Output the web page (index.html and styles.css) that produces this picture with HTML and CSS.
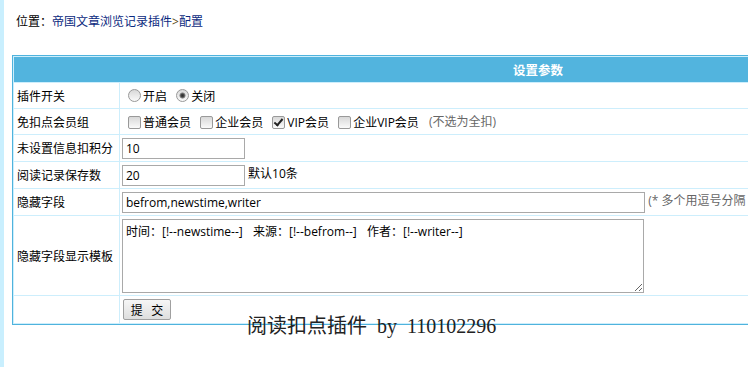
FILE: index.html
```html
<!DOCTYPE html>
<html lang="zh-CN">
<head>
    <meta charset="UTF-8">
    <title>阅读扣点插件 - 配置</title>
    <link rel="stylesheet" href="styles.css">
</head>
<body>
    <div class="frame">
        <div class="position">位置：<a href="#">帝国文章浏览记录插件</a><span class="sep">&gt;</span><a href="#">配置</a></div>
        <form id="setForm">
            <table class="tableborder">
                <tr class="header">
                    <td colspan="2">设置参数</td>
                </tr>
                <tr>
                    <td class="label">插件开关</td>
                    <td>
                        <input type="radio" name="open" value="1"><span class="opt">开启</span>
                        <input type="radio" name="open" value="0" checked><span class="opt">关闭</span>
                    </td>
                </tr>
                <tr>
                    <td class="label">免扣点会员组</td>
                    <td>
                        <input type="checkbox" name="group[]" value="1"><span class="opt">普通会员</span>
                        <input type="checkbox" name="group[]" value="2"><span class="opt">企业会员</span>
                        <input type="checkbox" name="group[]" value="3" checked><span class="opt">VIP会员</span>
                        <input type="checkbox" name="group[]" value="4"><span class="opt">企业VIP会员</span>
                        <span class="note group-note">(不选为全扣)</span>
                    </td>
                </tr>
                <tr class="tall">
                    <td class="label">未设置信息扣积分</td>
                    <td><input type="text" class="short" name="fen" value="10"></td>
                </tr>
                <tr class="tall">
                    <td class="label">阅读记录保存数</td>
                    <td><input type="text" class="short" name="num" value="20"> 默认10条</td>
                </tr>
                <tr class="tall">
                    <td class="label">隐藏字段</td>
                    <td><input type="text" class="long" name="fields" value="befrom,newstime,writer"> <span class="note">(* 多个用逗号分隔</span></td>
                </tr>
                <tr class="area">
                    <td class="label">隐藏字段显示模板</td>
                    <td><textarea name="temp">时间：[!--newstime--]&nbsp;&nbsp;来源：[!--befrom--]&nbsp;&nbsp;作者：[!--writer--]</textarea></td>
                </tr>
                <tr class="submit-row">
                    <td></td>
                    <td><input type="submit" value="提 交"></td>
                </tr>
            </table>
        </form>
        <div class="footer">阅读扣点插件 by 110102296</div>
    </div>
</body>
</html>
```

FILE: styles.css
```css
body {
    margin: 0;
    padding: 0;
    background-color: #fff;
    font-family: "Open Sans", "Noto Sans CJK SC", sans-serif;
    font-size: 12px;
    color: #000;
    overflow: hidden;
}
.frame {
    border-left: 4px solid #c9effe;
    padding-left: 8px;
    min-height: 367px;
    box-sizing: border-box;
}
.position {
    padding-left: 4px;
    padding-top: 14px;
    line-height: 16px;
    margin-bottom: 25px;
}
.position a {
    color: #0b2a80;
    text-decoration: none;
}
.position .sep {
    color: #5a4a10;
}
.tableborder {
    width: 1052px;
    border: 1px solid #4fb3dd;
    border-spacing: 1px;
    background-color: #cdeefc;
}
.tableborder td {
    background-color: #fff;
    padding: 0 3px;
    vertical-align: middle;
    white-space: nowrap;
}
.tableborder .header td {
    background-color: #52b4de;
    color: #fff;
    font-weight: bold;
    text-align: center;
    font-size: 12.5px;
}
.tableborder tr {
    height: 25px;
}
.tableborder tr.tall {
    height: 26px;
}
.tableborder tr.area {
    height: 79px;
}
.tableborder tr.submit-row {
    height: 27px;
}
.tableborder td.label {
    width: 99px;
}
/* old windows style radios and checkboxes */
input[type="radio"],
input[type="checkbox"] {
    -webkit-appearance: none;
    appearance: none;
    position: relative;
    width: 13px;
    height: 13px;
    box-sizing: border-box;
    margin: 0 2px 0 5px;
    border: 1px solid #999;
    background: linear-gradient(#d8d8d8, #fafafa);
    vertical-align: middle;
}
input[type="radio"] {
    border-radius: 50%;
}
input[type="radio"]:checked {
    background: radial-gradient(circle, #2e2e2e 0, #444 1.6px, #999 2.8px, rgba(255, 255, 255, 0) 3.4px), linear-gradient(#d8d8d8, #fafafa);
}
input[type="checkbox"] {
    border-radius: 2px;
}
input[type="checkbox"]:checked::after {
    content: "";
    position: absolute;
    left: 3px;
    top: 0;
    width: 3px;
    height: 7px;
    border: solid #222;
    border-width: 0 2px 2px 0;
    transform: rotate(40deg);
}
.opt {
    vertical-align: middle;
    margin-right: 1px;
}
.note {
    color: #666;
}
.group-note {
    margin-left: 6px;
}
input[type="text"] {
    margin-left: -1px;
    height: 21px;
    box-sizing: border-box;
    border: 1px solid #a9a9a9;
    padding: 0 3px;
    font-family: "Open Sans", "Noto Sans CJK SC", sans-serif;
    font-size: 12px;
    vertical-align: middle;
}
input.short {
    width: 123px;
}
input.long {
    width: 523px;
}
textarea {
    margin-left: -1px;
    display: block;
    width: 522px;
    height: 74px;
    box-sizing: border-box;
    border: 1px solid #a9a9a9;
    padding: 2px 3px;
    font-family: "Open Sans", "Noto Sans CJK SC", sans-serif;
    font-size: 12px;
    word-spacing: 2px;
    resize: both;
}
input[type="submit"] {
    width: 48px;
    height: 21px;
    margin-left: 0;
    border: 1px solid #a0a0a0;
    border-radius: 2px;
    background: linear-gradient(#f6f6f6, #dedede);
    font-family: "Noto Sans CJK SC", sans-serif;
    font-size: 12px;
    word-spacing: 6px;
    padding: 0;
    cursor: pointer;
}
.footer {
    margin-top: -11px;
    padding-left: 235px;
    font-family: "Liberation Serif", "Noto Sans CJK SC", serif;
    font-size: 20px;
    line-height: 24px;
    word-spacing: 5px;
    color: #222;
}
```
